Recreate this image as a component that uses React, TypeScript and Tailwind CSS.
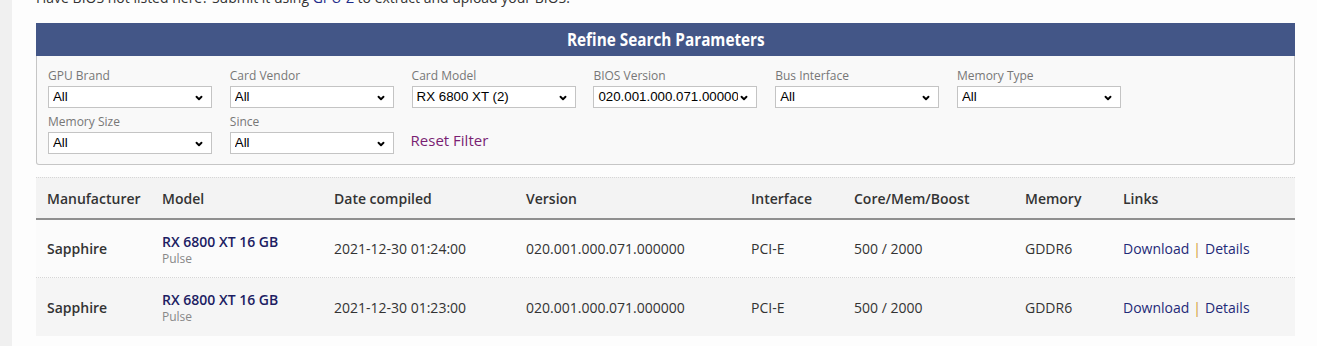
import { ChevronDown } from "lucide-react";

type Filter = { label: string; value: string };

const filters: Filter[] = [
  { label: "GPU Brand", value: "All" },
  { label: "Card Vendor", value: "All" },
  { label: "Card Model", value: "RX 6800 XT (2)" },
  { label: "BIOS Version", value: "020.001.000.071.000000" },
  { label: "Bus Interface", value: "All" },
  { label: "Memory Type", value: "All" },
  { label: "Memory Size", value: "All" },
  { label: "Since", value: "All" },
];

const rows = [
  { date: "2021-12-30 01:24:00", bg: "bg-[#fbfbfb]", h: "h-[58px] border-b border-dotted border-[#d6d6d6]" },
  { date: "2021-12-30 01:23:00", bg: "bg-[#f5f5f5]", h: "h-[58px]" },
];

const cols = "grid grid-cols-[115px_172px_192px_225px_103px_171px_98px_1fr]";

function FakeSelect({ value }: { value: string }) {
  return (
    <div className="relative flex h-[22px] w-[164px] items-center border border-[#c4c4c4] bg-white pl-[4px] pr-[18px] text-[13.3px] text-black font-['Liberation_Sans',sans-serif] overflow-hidden whitespace-nowrap">
      <span className="overflow-hidden">{value}</span>
      <ChevronDown
        className="absolute right-[7px] top-[6px] h-[10px] w-[10px] text-black"
        strokeWidth={4.5}
      />
    </div>
  );
}

function FilterField({ f }: { f: Filter }) {
  return (
    <div className="flex flex-col">
      <label className="text-[12px] leading-[17px] text-[#777]">{f.label}</label>
      <div className="mt-[2px]">
        <FakeSelect value={f.value} />
      </div>
    </div>
  );
}

export default function App() {
  return (
    <div className="flex h-[346px] w-[1317px] overflow-hidden bg-[#f0f0f0] font-['Open_Sans',sans-serif] text-[#333]">
      <div className="ml-[12px] flex-1 bg-[#fdfdfd] pl-[24px] pr-[22px]">
        {/* Intro line (scrolled off) */}
        <p className="-mt-[12px] h-[16px] text-[14px] leading-[20px] whitespace-nowrap">
          Have BIOS not listed here? Submit it using{" "}
          <span className="text-[#1e2c8a]">GPU-Z</span> to extract and upload your BIOS.
        </p>

        {/* Refine panel */}
        <div className="mt-[19px] rounded-b-[3px] border border-t-0 border-[#c6c6c6] bg-[#f9f9f9]">
          <div className="-mx-px flex h-[33px] items-center justify-center bg-[#435687]">
            <span className="inline-block scale-x-[0.9] text-[17px] font-bold text-white">
              Refine Search Parameters
            </span>
          </div>
          <div className="px-[11px] pt-[11px] pb-[10px]">
            <div className="grid grid-cols-[repeat(6,164px)] gap-x-[17.8px] gap-y-[5px]">
              {filters.map((f) => (
                <FilterField key={f.label} f={f} />
              ))}
              <div className="flex items-end pb-[4px] -ml-[1px]">
                <a className="text-[15px] leading-[20px] text-[#7a1f73]">Reset Filter</a>
              </div>
            </div>
          </div>
        </div>

        {/* Results table */}
        <div className="mt-[12px] text-[14px]">
          <div
            className={`${cols} h-[43px] items-center border-t border-dotted border-[#d6d6d6] border-b-2 border-b-[#8f8f8f] bg-[#f3f3f3] font-semibold`}
            style={{ borderBottomStyle: "solid" }}
          >
            {["Manufacturer", "Model", "Date compiled", "Version", "Interface", "Core/Mem/Boost", "Memory", "Links"].map((h) => (
              <div key={h} className="px-[11px] whitespace-nowrap">
                {h}
              </div>
            ))}
          </div>
          {rows.map((r) => (
            <div key={r.date} className={`${cols} items-center ${r.bg} ${r.h}`}>
              <div className="px-[11px] font-semibold">Sapphire</div>
              <div className="px-[11px] pt-[1px]">
                <div className="text-[14px] leading-[18px] font-semibold text-[#1d1d63]">RX 6800 XT 16 GB</div>
                <div className="text-[12px] leading-[15px] text-[#888]">Pulse</div>
              </div>
              <div className="px-[11px]">{r.date}</div>
              <div className="px-[11px]">020.001.000.071.000000</div>
              <div className="px-[11px]">PCI-E</div>
              <div className="px-[11px]">500 / 2000</div>
              <div className="px-[11px]">GDDR6</div>
              <div className="px-[11px] whitespace-nowrap">
                <a className="text-[#1f2a78]">Download</a>
                <span className="mx-[4px] text-[#d39a3a]">|</span>
                <a className="text-[#1f2a78]">Details</a>
              </div>
            </div>
          ))}
        </div>
      </div>
    </div>
  );
}
